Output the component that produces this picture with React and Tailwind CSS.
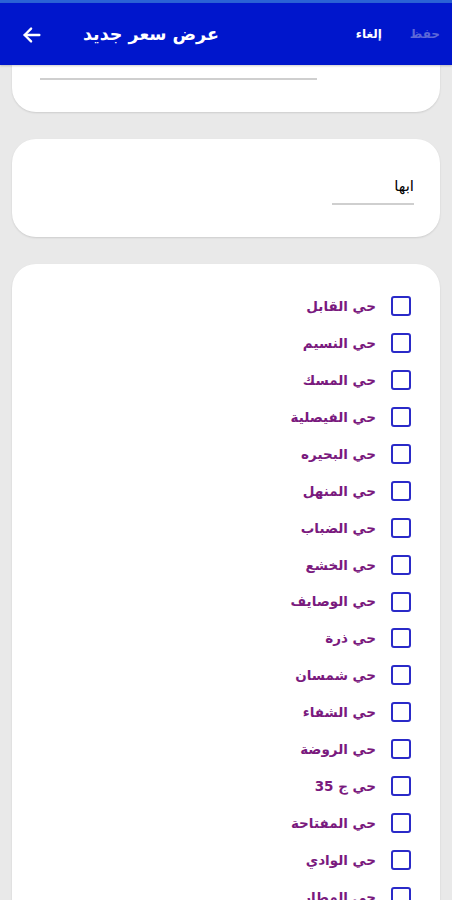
import React from "react";

const areas = [
  "حي القابل",
  "حي النسيم",
  "حي المسك",
  "حي الفيصلية",
  "حي البحيره",
  "حي المنهل",
  "حي الضباب",
  "حي الخشع",
  "حي الوصايف",
  "حي ذرة",
  "حي شمسان",
  "حي الشفاء",
  "حي الروضة",
  "حي ج 35",
  "حي المفتاحة",
  "حي الوادي",
  "حي المطار",
];

export default function App() {
  return (
    <div
      className="w-[452px] h-[900px] overflow-hidden bg-[#e9e9e9]"
      style={{ fontFamily: '"DejaVu Sans", "Noto Sans", sans-serif' }}
    >
      <div className="h-[3px] bg-[#2a62d6]" />
      <div className="h-[62px] bg-[#0016cc] flex items-center text-white shadow-[0_1px_2px_rgba(0,0,0,0.2)] relative z-10">
        <div className="w-[64px] flex justify-center pt-[2px]">
          <svg width="22" height="22" viewBox="0 0 24 24" fill="none" stroke="white" strokeWidth="2.6" strokeLinecap="round" strokeLinejoin="round">
            <path d="M20 12H4" />
            <path d="M11 5l-7 7 7 7" />
          </svg>
        </div>
        <div className="ml-[19px] text-[17.5px] font-bold" dir="rtl">عرض سعر جديد</div>
        <div className="flex-1" />
        <div className="text-[12px] font-bold mr-[28px]" dir="rtl">إلغاء</div>
        <div className="text-[12px] font-bold mr-[12px] text-[#5c68d8]" dir="rtl">حفظ</div>
      </div>

      <div className="px-[12px]">
        <div className="h-[47px] bg-white rounded-b-[24px] shadow-[0_1px_2px_rgba(0,0,0,0.12)] pt-[13px] pl-[28px]">
          <div className="w-[277px] h-[2px] bg-[#cfcfcf]" />
        </div>

        <div className="mt-[27px] h-[98px] bg-white rounded-[24px] shadow-[0_1px_2px_rgba(0,0,0,0.12)] flex justify-end pt-[36px] pr-[26px]">
          <div className="w-[82px] flex flex-col items-end" dir="rtl">
            <div className="text-[15px] text-black leading-[22px] w-full text-right">ابها</div>
            <div className="mt-[6px] w-full h-[2px] bg-[#cfcfcf]" />
          </div>
        </div>

        <div className="mt-[27px] bg-white rounded-t-[24px] shadow-[0_1px_2px_rgba(0,0,0,0.12)] pt-[24px] pr-[29px] h-[700px]" dir="rtl">
          {areas.map((a) => (
            <div key={a} className="h-[36.9px] flex items-center gap-[15px]">
              <div className="w-[20px] h-[20px] border-2 border-[#2a2ac8] rounded-[3px] shrink-0" />
              <div className="text-[13.5px] font-bold text-[#7a1a7e]">{a}</div>
            </div>
          ))}
        </div>
      </div>
    </div>
  );
}
